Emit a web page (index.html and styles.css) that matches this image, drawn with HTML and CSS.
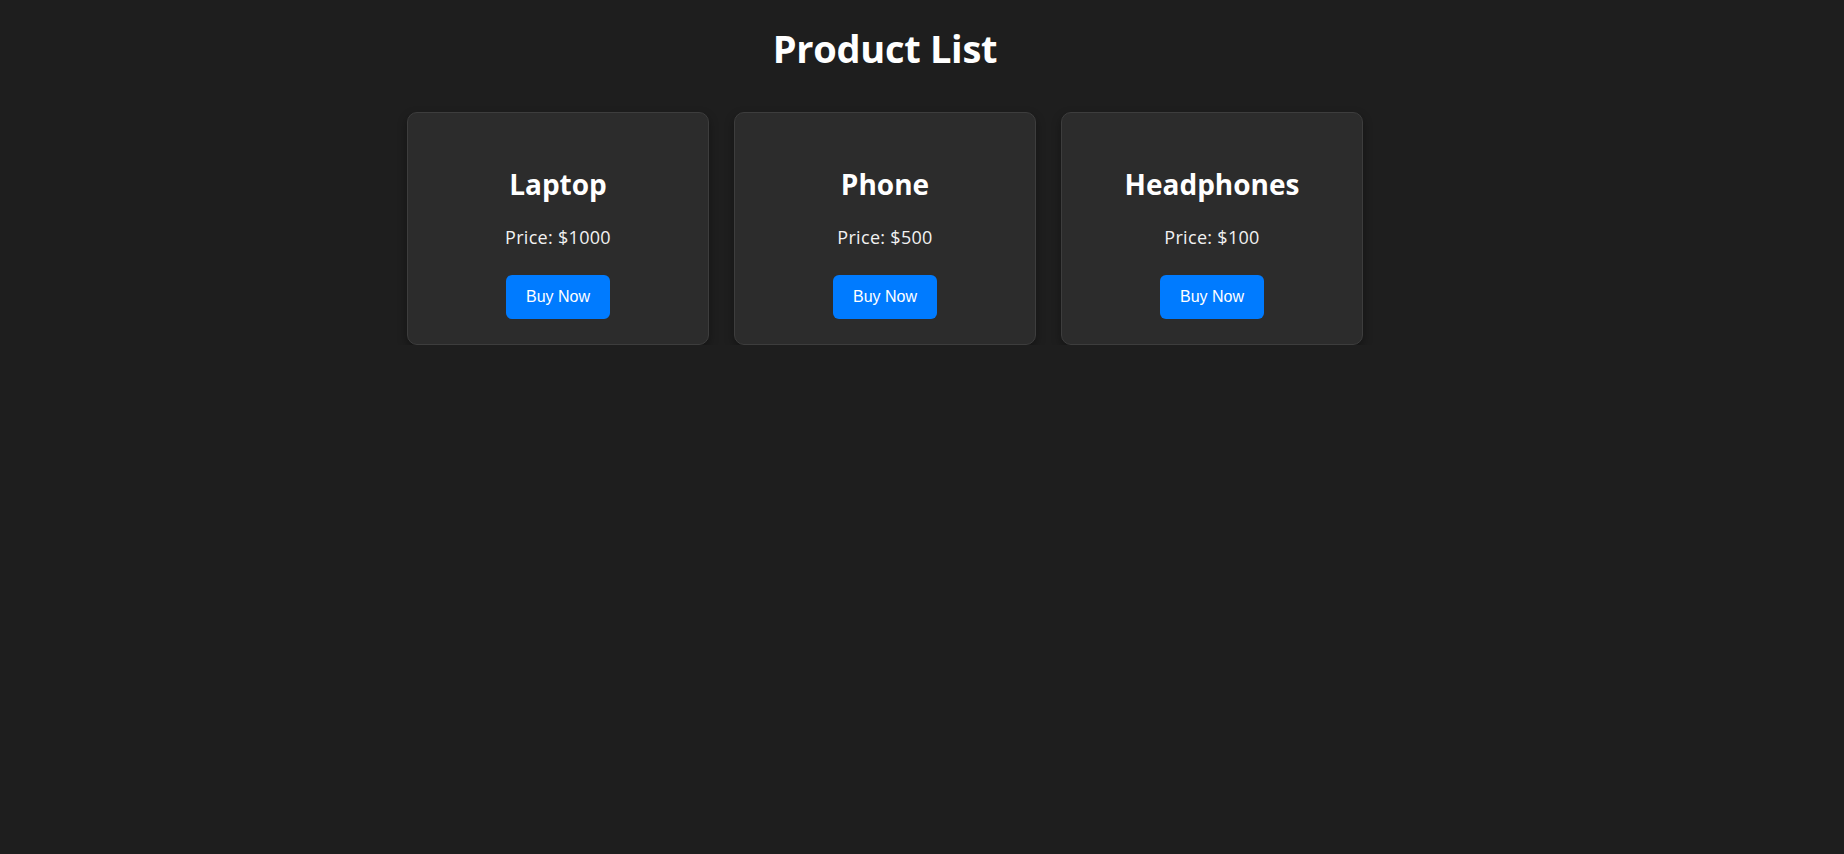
FILE: index.html
```html
<!DOCTYPE html>
<html lang="en">
<head>
<meta charset="utf-8">
<title>Product List</title>
<link rel="stylesheet" href="styles.css">
</head>
<body>
  <main class="page">
    <h1 class="page-title">Product List</h1>
    <div class="product-list">
      <div class="product-card">
        <h2 class="product-name">Laptop</h2>
        <p class="product-price">Price: $1000</p>
        <button class="buy-btn">Buy Now</button>
      </div>
      <div class="product-card">
        <h2 class="product-name">Phone</h2>
        <p class="product-price">Price: $500</p>
        <button class="buy-btn">Buy Now</button>
      </div>
      <div class="product-card">
        <h2 class="product-name">Headphones</h2>
        <p class="product-price">Price: $100</p>
        <button class="buy-btn">Buy Now</button>
      </div>
    </div>
  </main>
</body>
</html>
```
FILE: styles.css
```css
html, body {
  margin: 0;
  padding: 0;
  background: #1e1e1e;
}

body {
  font-family: "Open Sans", "Noto Sans", "DejaVu Sans", sans-serif;
  color: #ffffff;
}

.page {
  padding: 24px 74px 0 0;
  text-align: center;
}

.page-title {
  margin: 0;
  font-size: 38px;
  line-height: 48px;
  font-weight: 700;
  letter-spacing: -0.3px;
}

.product-list {
  display: flex;
  justify-content: center;
  gap: 25px;
  margin-top: 40px;
}

.product-card {
  box-sizing: border-box;
  width: 302px;
  padding: 53px 20px 25px;
  background: #2c2c2c;
  border: 1px solid #3d3d3d;
  border-radius: 10px;
  box-shadow: 0 4px 10px rgba(0, 0, 0, 0.35);
}

.product-name {
  margin: 0;
  font-size: 28px;
  line-height: 36px;
  font-weight: 700;
}

.product-price {
  margin: 23px 0 26px;
  font-size: 18px;
  line-height: 24px;
  letter-spacing: 0.3px;
  color: #f2f2f2;
}

.buy-btn {
  height: 44px;
  padding: 0 20px;
  border: none;
  border-radius: 6px;
  background: #007bff;
  color: #ffffff;
  font-family: "Liberation Sans", Arial, sans-serif;
  font-size: 16px;
  line-height: 20px;
  cursor: pointer;
}
```
